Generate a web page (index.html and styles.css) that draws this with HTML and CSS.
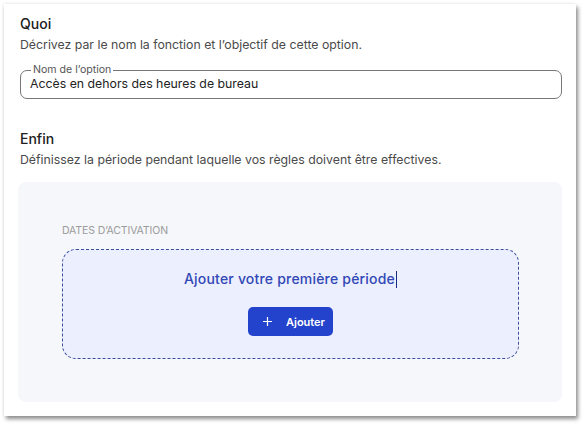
FILE: index.html
```html
<!DOCTYPE html>
<html lang="fr">
<head>
<meta charset="utf-8">
<title>Option</title>
<link rel="stylesheet" href="styles.css">
</head>
<body>
<div class="card">
  <section class="section">
    <h2 class="title">Quoi</h2>
    <p class="desc">Décrivez par le nom la fonction et l’objectif de cette option.</p>
    <fieldset class="field">
      <legend class="field-label">Nom de l’option</legend>
      <div class="field-value">Accès en dehors des heures de bureau</div>
    </fieldset>
  </section>
  <section class="section section-end">
    <h2 class="title">Enfin</h2>
    <p class="desc">Définissez la période pendant laquelle vos règles doivent être effectives.</p>
    <div class="panel">
      <div class="panel-label">Dates d’activation</div>
      <div class="dropzone">
        <div class="dropzone-text">Ajouter votre première période<span class="caret"></span></div>
        <button class="btn" type="button">
          <svg class="btn-icon" width="9" height="9" viewBox="0 0 9 9"><path d="M4.5 0V9M0 4.5H9" stroke="#fff" stroke-width="1.2" fill="none"/></svg>
          <span>Ajouter</span>
        </button>
      </div>
    </div>
  </section>
</div>
</body>
</html>
```
FILE: styles.css
```css
* { box-sizing: border-box; }
html, body { margin: 0; padding: 0; background: #ffffff; }
body {
  font-family: Inter, "Noto Sans", sans-serif;
  color: #222;
  width: 586px;
  height: 426px;
  overflow: hidden;
}
.card {
  margin: 4px 0 0 4px;
  width: 572px;
  height: 412px;
  background: #fff;
  padding: 11px 14px 0 16px;
  box-shadow: 2px 3px 4px rgba(0,0,0,0.45), -1px -1px 3px rgba(0,0,0,0.06);
}
.title {
  margin: 0;
  font-size: 14px;
  line-height: 18px;
  font-weight: 500;
  color: #202020;
}
.desc {
  margin: 3px 0 0 0;
  font-size: 12.3px;
  line-height: 17px;
  color: #4a4a4a;
}
.field {
  margin: 11px 0 0 0;
  padding: 0 9px 0 9px;
  border: 1px solid #777;
  border-radius: 7px;
  height: 35px;
}
.field-label {
  font-size: 10.6px;
  line-height: 12px;
  color: #555;
  padding: 0 2px;
  margin-left: 1px;
}
.field-value {
  font-size: 12.3px;
  line-height: 16px;
  color: #222;
}
.section-end { margin-top: 31px; }
.panel {
  margin: 14px 0 0 -2px;
  width: 544px;
  height: 220px;
  background: #f6f7fa;
  border-radius: 8px;
  padding: 43px 43px 0 44px;
}
.panel-label {
  font-size: 10.5px;
  line-height: 12px;
  text-transform: uppercase;
  color: #9b9b9b;
  letter-spacing: -0.1px;
}
.dropzone {
  margin-top: 12px;
  height: 110px;
  border: 1px dashed #3a4e9e;
  border-radius: 14px;
  background: #eceffd;
  display: flex;
  flex-direction: column;
  align-items: center;
  padding-top: 19px;
}
.dropzone-text {
  font-size: 14px;
  line-height: 20px;
  font-weight: 500;
  color: #3147b5;
  letter-spacing: 0.2px;
}
.caret {
  display: inline-block;
  width: 1px;
  height: 17px;
  background: #1a2a80;
  vertical-align: -4px;
  margin-left: 1px;
}
.btn {
  margin-top: 18px;
  height: 29px;
  width: 85px;
  border: 0;
  border-radius: 5px;
  background: #2443cc;
  color: #fff;
  font-family: inherit;
  font-size: 11px;
  font-weight: 600;
  display: flex;
  align-items: center;
  justify-content: flex-start;
  gap: 14px;
  padding: 0 0 0 15px;
}
.btn-icon { display: block; }
```
